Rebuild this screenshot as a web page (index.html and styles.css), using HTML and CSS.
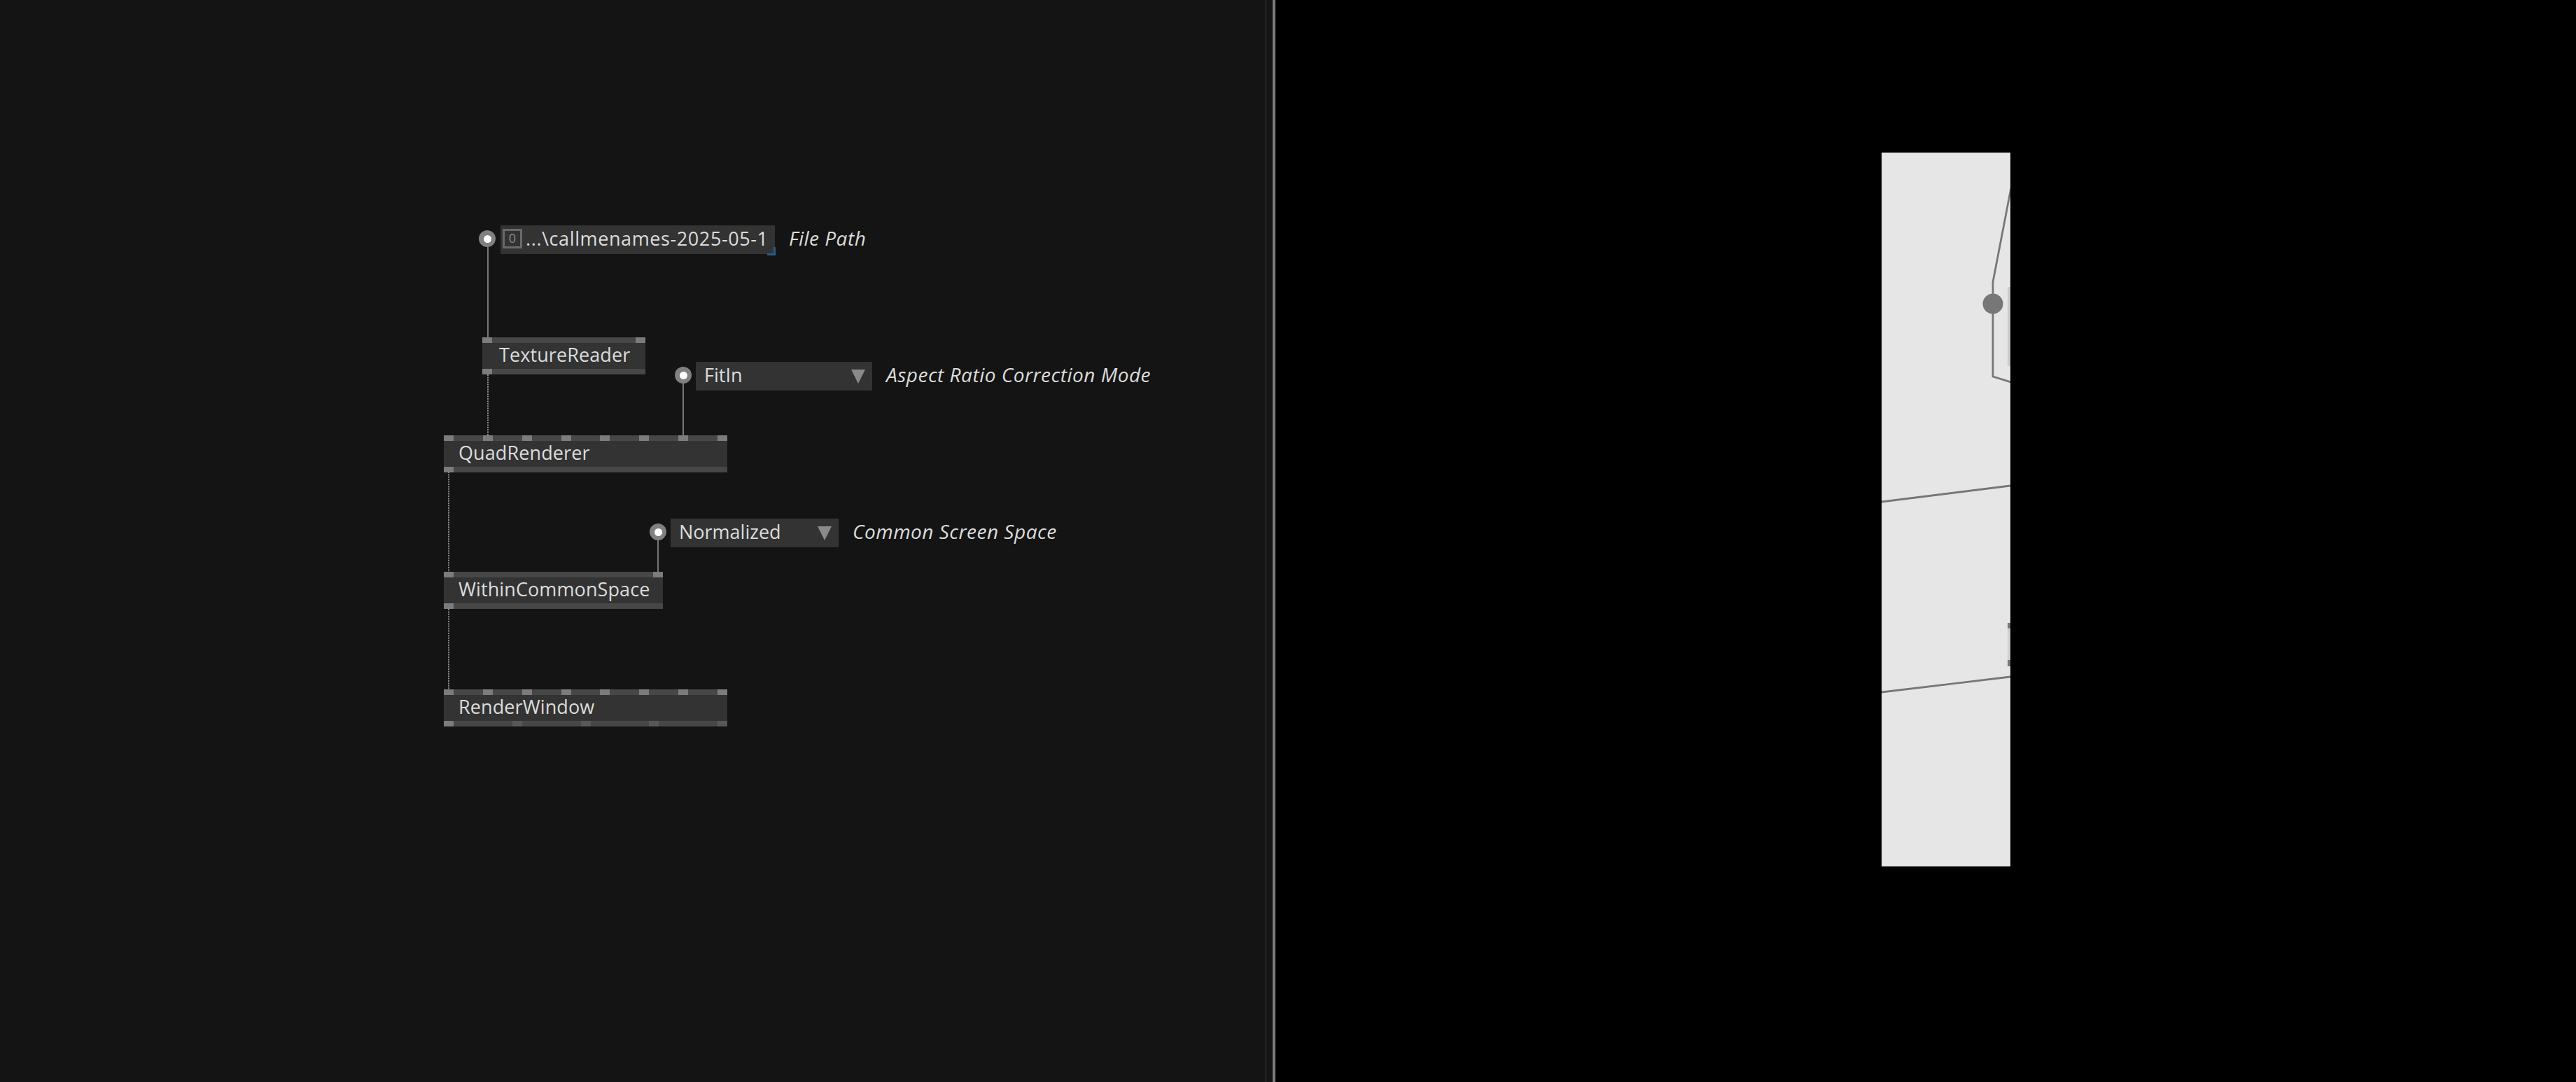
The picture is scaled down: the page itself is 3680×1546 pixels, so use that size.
FILE: index.html
```html
<!DOCTYPE html>
<html>
<head>
<meta charset="utf-8">
<link rel="stylesheet" href="styles.css">
</head>
<body>
<div class="app">
  <div class="graph">
    <svg class="wires" width="1808" height="1546" viewBox="0 0 1808 1546">
      <line class="wire" x1="697" y1="352" x2="697" y2="482"/>
      <line class="wire dotted" x1="697" y1="535" x2="697" y2="622"/>
      <line class="wire" x1="976" y1="547" x2="976" y2="622"/>
      <line class="wire dotted" x1="641" y1="674" x2="641" y2="817"/>
      <line class="wire" x1="940" y1="771" x2="940" y2="817"/>
      <line class="wire dotted" x1="641" y1="870" x2="641" y2="985"/>
    </svg>

    <div class="param p-file">
      <span class="socket"></span>
      <div class="field string">
        <span class="clip"><span class="zero">0</span><span class="value">...\callmenames-2025-05-1</span></span>
        <span class="resize"></span>
      </div>
      <span class="label">File Path</span>
    </div>

    <div class="param p-fit">
      <span class="socket"></span>
      <div class="field enum w-fit"><span class="value">FitIn</span><span class="arrow"></span></div>
      <span class="label">Aspect Ratio Correction Mode</span>
    </div>

    <div class="param p-norm">
      <span class="socket"></span>
      <div class="field enum w-norm"><span class="value">Normalized</span><span class="arrow"></span></div>
      <span class="label">Common Screen Space</span>
    </div>

    <div class="node n-texture">
      <div class="bar"><span class="pin"></span><span class="pin"></span></div>
      <div class="title t-texture">TextureReader</div>
      <div class="bar"><span class="pin"></span></div>
    </div>

    <div class="node n-quad">
      <div class="bar"><span class="pin"></span><span class="pin"></span><span class="pin"></span><span class="pin"></span><span class="pin"></span><span class="pin"></span><span class="pin"></span><span class="pin"></span></div>
      <div class="title">QuadRenderer</div>
      <div class="bar"><span class="pin"></span></div>
    </div>

    <div class="node n-within">
      <div class="bar"><span class="pin"></span><span class="pin"></span></div>
      <div class="title">WithinCommonSpace</div>
      <div class="bar"><span class="pin"></span></div>
    </div>

    <div class="node n-render">
      <div class="bar"><span class="pin"></span><span class="pin"></span><span class="pin"></span><span class="pin"></span><span class="pin"></span><span class="pin"></span><span class="pin"></span><span class="pin"></span></div>
      <div class="title">RenderWindow</div>
      <div class="bar"><span class="pin"></span><span class="pin dim"></span><span class="pin dim"></span><span class="pin dim"></span><span class="pin dim"></span></div>
    </div>
  </div>
  <div class="split-line"></div>
  <div class="split-gap"></div>
  <div class="split-handle"></div>
  <div class="viewport">
    <div class="preview">
      <svg width="184" height="1020" viewBox="0 0 184 1020">
        <rect x="180" y="192" width="4" height="113" fill="#cbcbcb"/>
        <polyline points="185,50 159,185 159,320 185,328" fill="none" stroke="#777" stroke-width="2.8"/>
        <circle cx="159" cy="216" r="14.5" fill="#777"/>
        <line x1="0" y1="499" x2="184" y2="476" stroke="#777" stroke-width="2.8"/>
        <line x1="0" y1="771" x2="184" y2="749" stroke="#777" stroke-width="2.8"/>
        <rect x="180" y="672" width="4" height="62" fill="#cfcfcf"/>
        <rect x="180" y="672" width="4" height="8" fill="#777"/>
        <rect x="180" y="725" width="4" height="9" fill="#777"/>
      </svg>
    </div>
  </div>
</div>
</body>
</html>
```

FILE: styles.css
```css
html, body {
  margin: 0;
  padding: 0;
}

body {
  width: 3680px;
  height: 1546px;
  overflow: hidden;
  background: #000;
  font-family: "Open Sans", "Noto Sans", sans-serif;
  color: #dcdcdc;
}

.app {
  display: flex;
  height: 1546px;
}

.graph {
  position: relative;
  flex: 0 0 1808px;
  background: #141414;
}

.split-line {
  flex: 0 0 1px;
  background: #3b3b3b;
}

.split-gap {
  flex: 0 0 9px;
  background: #141414;
}

.split-handle {
  flex: 0 0 4px;
  background: #7a7a7a;
}

.viewport {
  flex: 1;
  background: #000;
  padding: 218px 0 0 866px;
  box-sizing: border-box;
}

.preview {
  width: 184px;
  height: 1020px;
  background: #e6e6e6;
}

.preview svg {
  display: block;
}

/* wires */
.wires {
  position: absolute;
  left: 0;
  top: 0;
}

.wire {
  stroke: #787878;
  stroke-width: 2;
}

.wire.dotted {
  stroke: #8a8a8a;
  stroke-dasharray: 2 1.4;
}

/* nodes */
.node {
  position: absolute;
  display: flex;
  flex-direction: column;
}

.n-texture { left: 689px; top: 482px; width: 233px; }
.n-quad    { left: 634px; top: 622px; width: 405px; }
.n-within  { left: 634px; top: 817px; width: 313px; }
.n-render  { left: 634px; top: 985px; width: 405px; }

.bar {
  height: 8px;
  background: #474747;
  display: flex;
  justify-content: space-between;
}

.pin {
  width: 14px;
  height: 100%;
  background: #7c7c7c;
}

.pin.dim {
  background: #585858;
}

.title {
  height: 37px;
  background: #333333;
  font-size: 27px;
  line-height: 33px;
  padding-left: 21px;
  white-space: nowrap;
  letter-spacing: 0.1px;
}

.title.t-texture {
  padding-left: 24px;
}

/* parameter inputs */
.param {
  position: absolute;
  display: flex;
  align-items: center;
  height: 41px;
}

.p-file { left: 684px; top: 322px; }
.p-fit  { left: 964px; top: 517px; }
.p-norm { left: 928px; top: 741px; }

.socket {
  flex: 0 0 24px;
  width: 24px;
  height: 24px;
  margin-top: -3px;
  border-radius: 50%;
  background: #808080;
  display: flex;
  align-items: center;
  justify-content: center;
}

.socket::after {
  content: "";
  width: 11px;
  height: 11px;
  border-radius: 50%;
  background: #fff;
}

.field {
  position: relative;
  height: 41px;
  background: #333333;
  display: flex;
  align-items: center;
  font-size: 27px;
  white-space: nowrap;
  box-sizing: border-box;
}

.field .value {
  margin-bottom: 4px;
}

.field.string {
  width: 392px;
  margin-left: 7px;
  padding-left: 3px;
}

.field.string .value {
  letter-spacing: 0.6px;
}

.clip {
  display: flex;
  align-items: center;
  overflow: hidden;
  width: 385px;
  height: 41px;
}

.zero {
  flex: 0 0 28px;
  width: 28px;
  height: 28px;
  box-sizing: border-box;
  border: 3px solid #6a6a6a;
  color: #8a8a8a;
  font-size: 18px;
  line-height: 21px;
  text-align: center;
  margin-right: 5px;
  margin-bottom: 3px;
}

.resize {
  position: absolute;
  right: -1px;
  bottom: -2px;
  width: 9px;
  height: 9px;
  border-right: 3px solid #235d88;
  border-bottom: 3px solid #235d88;
}

.field.enum {
  margin-left: 6px;
  padding: 0 10px 0 12px;
  justify-content: space-between;
}

.w-fit  { width: 252px; }
.w-norm { width: 240px; }

.arrow {
  width: 0;
  height: 0;
  border-left: 10px solid transparent;
  border-right: 10px solid transparent;
  border-top: 20px solid #8a8a8a;
}

.label {
  margin-left: 20px;
  margin-bottom: 6px;
  font-style: italic;
  font-size: 28px;
  letter-spacing: 0.5px;
  white-space: nowrap;
  color: #dcdcdc;
}
```
